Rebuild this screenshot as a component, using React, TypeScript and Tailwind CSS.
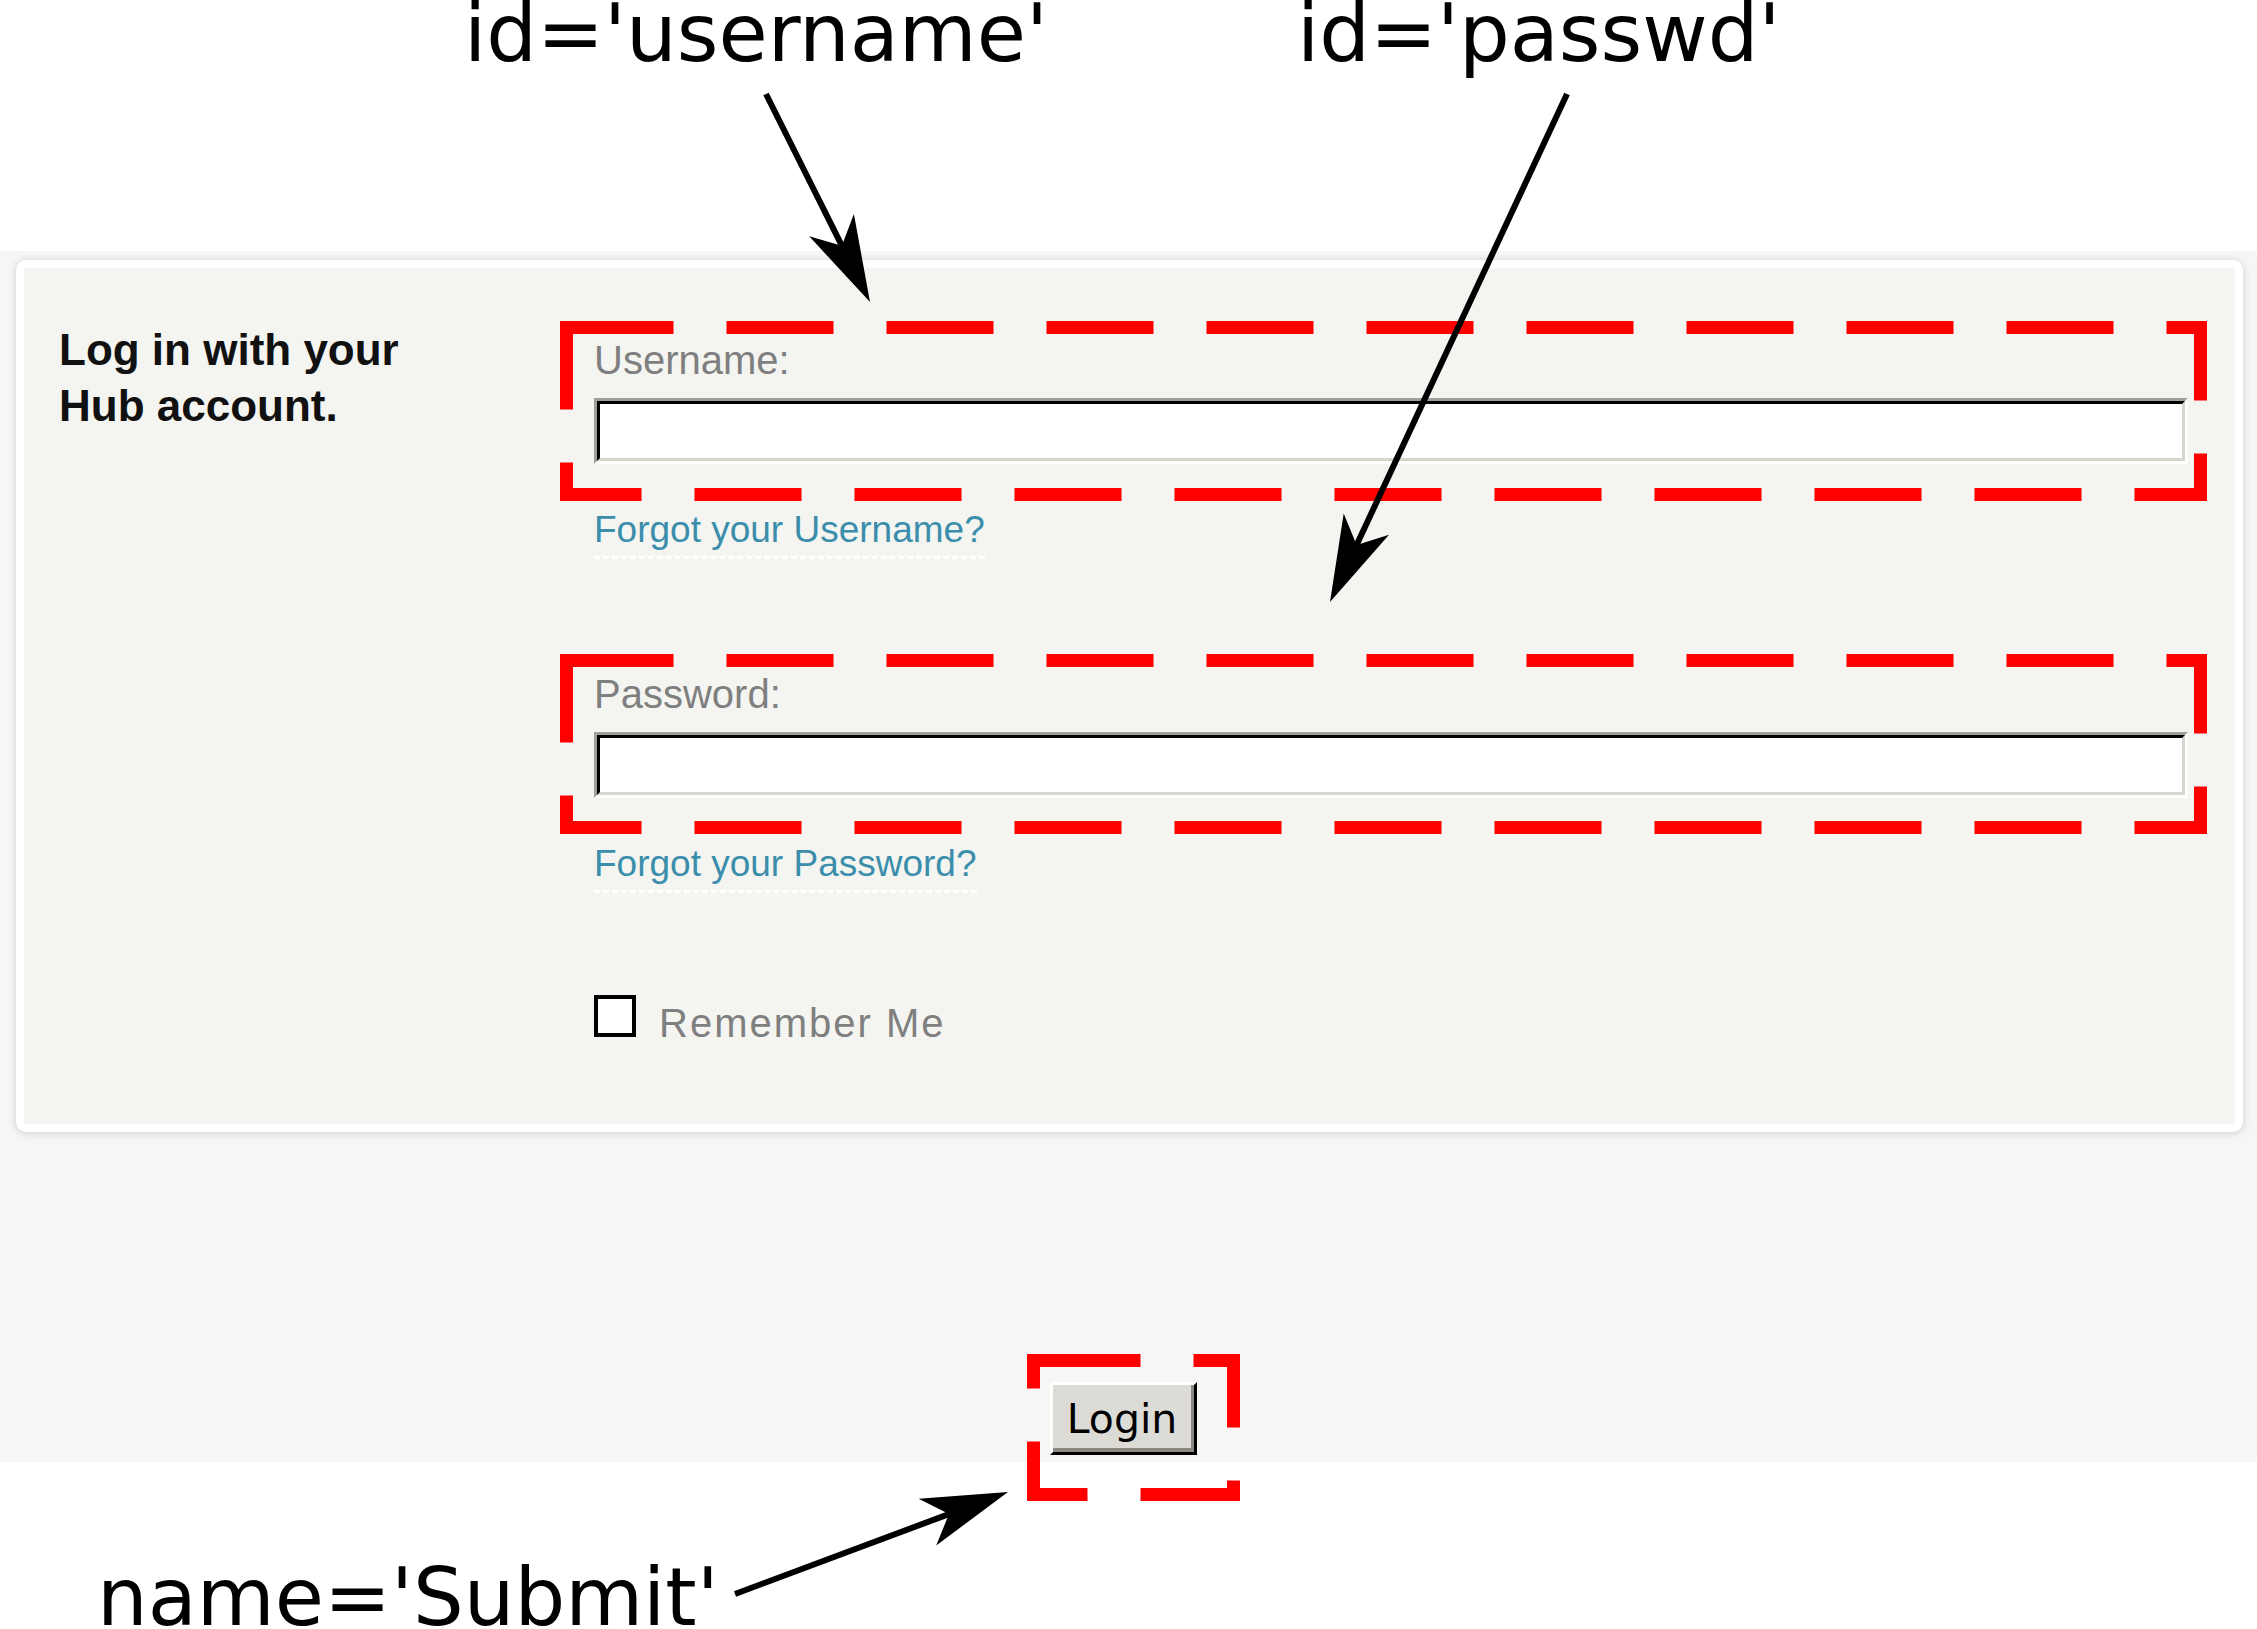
import React from "react";

// Annotated screenshot of the Hub login form: the page itself is laid out in flow,
// the red dashed boxes, arrows and id labels sit on top as an overlay.

const sans = { fontFamily: '"Liberation Sans", Arial, sans-serif' };
const dejavu = { fontFamily: '"DejaVu Sans", Verdana, sans-serif' };

type Arrow = { sx: number; sy: number; tx: number; ty: number };

const arrows: Arrow[] = [
  { sx: 766, sy: 94, tx: 870, ty: 302 },
  { sx: 1567, sy: 94, tx: 1330, ty: 602 },
  { sx: 735, sy: 1594, tx: 1008, ty: 1492 },
];

const boxes = [
  { x: 566.5, y: 327.5, w: 1634, h: 167 },
  { x: 566.5, y: 660.5, w: 1634, h: 167 },
  { x: 1033.5, y: 1360.5, w: 200, h: 134 },
];

function arrowHead({ sx, sy, tx, ty }: Arrow) {
  const len = Math.hypot(tx - sx, ty - sy);
  const dx = (tx - sx) / len;
  const dy = (ty - sy) / len;
  const px = -dy;
  const py = dx;
  const back = 86;
  const notch = 63;
  const half = 25;
  const pts = [
    [tx, ty],
    [tx - back * dx + half * px, ty - back * dy + half * py],
    [tx - notch * dx, ty - notch * dy],
    [tx - back * dx - half * px, ty - back * dy - half * py],
  ];
  return {
    points: pts.map((p) => p.join(",")).join(" "),
    ex: tx - (notch - 12) * dx,
    ey: ty - (notch - 12) * dy,
  };
}

const TextField = ({ type = "text" }: { type?: string }) => (
  <div className="h-[66px] w-full border-[3px] border-t-[#a19e96] border-l-[#a19e96] border-r-white border-b-white">
    <input
      type={type}
      className="block h-full w-full border-[3px] border-t-black border-l-black border-r-[#d6d5ce] border-b-[#d6d5ce] bg-white outline-none"
    />
  </div>
);

const FieldLabel = ({ children }: { children: React.ReactNode }) => (
  <div className="text-[40px] leading-[46px] text-[#7f7f7f]" style={sans}>
    {children}
  </div>
);

const ForgotLink = ({ children }: { children: React.ReactNode }) => (
  <a
    href="#"
    className="inline-block border-b-[3px] border-dashed border-white pb-[4px] text-[37px] leading-[44px] text-[#3b8eab]"
    style={sans}
  >
    {children}
  </a>
);

const Overlay = () => (
  <>
    <svg
      className="pointer-events-none absolute left-0 top-0"
      width={2257}
      height={1629}
      viewBox="0 0 2257 1629"
    >
      {boxes.map((b, i) => (
        <rect
          key={i}
          x={b.x}
          y={b.y}
          width={b.w}
          height={b.h}
          fill="none"
          stroke="#ff0000"
          strokeWidth={13}
          strokeDasharray="107 53"
        />
      ))}
      {arrows.map((a, i) => {
        const h = arrowHead(a);
        return (
          <g key={i}>
            <line x1={a.sx} y1={a.sy} x2={h.ex} y2={h.ey} stroke="#000" strokeWidth={6} />
            <polygon points={h.points} fill="#000" />
          </g>
        );
      })}
    </svg>
    <div className="absolute left-[464px] top-[4px] text-[80px] leading-[60px] text-black" style={dejavu}>
      id='username'
    </div>
    <div className="absolute left-[1297px] top-[4px] text-[80px] leading-[60px] text-black" style={dejavu}>
      id='passwd'
    </div>
    <div className="absolute left-[97px] top-[1568px] text-[80px] leading-[60px] text-black" style={dejavu}>
      name='Submit'
    </div>
  </>
);

export default function App() {
  return (
    <div className="relative h-[1629px] w-[2257px] overflow-hidden bg-white">
      <div className="h-[251px]" />

      <div className="h-[1211px] bg-[#f7f6f4] pt-[9px]">
        <div className="ml-[16px] mr-[14px] h-[872px] rounded-[10px] border-[8px] border-white bg-[#f4f5f1] shadow-[0_1px_9px_rgba(0,0,0,0.17)]">
          <div className="flex">
            <div className="w-[570px] pl-[35px] pt-[54px]">
              <p className="text-[44px] font-bold leading-[56px] text-[#111]" style={sans}>
                Log in with your
                <br />
                Hub account.
              </p>
            </div>

            <form className="w-[1594px] pt-[69px]" onSubmit={(e) => e.preventDefault()}>
              <FieldLabel>Username:</FieldLabel>
              <div className="mt-[15px]">
                <TextField />
              </div>
              <div className="mt-[44px]">
                <ForgotLink>Forgot your Username?</ForgotLink>
              </div>

              <div className="mt-[112px]">
                <FieldLabel>Password:</FieldLabel>
              </div>
              <div className="mt-[15px]">
                <TextField type="password" />
              </div>
              <div className="mt-[44px]">
                <ForgotLink>Forgot your Password?</ForgotLink>
              </div>

              <label className="mt-[102px] flex items-start gap-[23px]">
                <span className="block h-[42px] w-[42px] border-[4px] border-black bg-white" />
                <span
                  className="mt-[5px] text-[40px] leading-[46px] tracking-[2px] text-[#7f7f7f]"
                  style={sans}
                >
                  Remember Me
                </span>
              </label>
            </form>
          </div>
        </div>

        <div className="mt-[250px] flex justify-center">
          <button
            type="button"
            className="mr-[10px] h-[73px] w-[147px] border-[3px] border-t-white border-l-white border-r-black border-b-black bg-[#dcdbd6]"
          >
            <span
              className="flex h-full w-full items-center justify-center border-r-[3px] border-b-[4px] border-r-[#8c8983] border-b-[#8c8983] pt-[6px] text-[41px] leading-none text-black"
              style={dejavu}
            >
              Login
            </span>
          </button>
        </div>
      </div>

      <Overlay />
    </div>
  );
}
